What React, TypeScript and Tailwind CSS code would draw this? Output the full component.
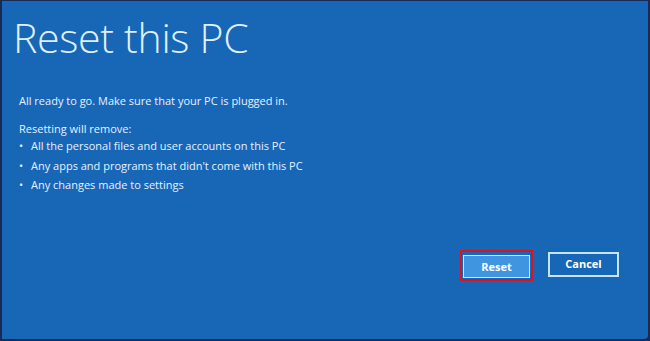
import React from 'react';

const items = [
    "All the personal files and user accounts on this PC",
    "Any apps and programs that didn't come with this PC",
    "Any changes made to settings",
];

function App() {
    return (
        <div className="w-[650px] h-[341px] bg-[#1a2a56] pt-px pl-[2px] pr-[2px] pb-[2px]" style={{fontFamily: '"Open Sans", "Noto Sans", sans-serif'}}>
            <div className="w-full h-full bg-[#1866b6] flex flex-col text-[#e6f2ff] rounded-br-[4px]">
                <h1 className="text-[41px] font-light leading-none pl-[11px] pt-[16px] tracking-[-0.3px] text-[#dff0ff]">Reset this PC</h1>
                <p className="text-[11px] pl-[17px] mt-[35px]">All ready to go. Make sure that your PC is plugged in.</p>
                <p className="text-[11px] pl-[17px] mt-[11px]">Resetting will remove:</p>
                <ul className="text-[11px] pl-[17px] mt-px flex flex-col gap-[3px]">
                    {items.map((item) => (
                        <li key={item} className="flex items-center">
                            <span className="w-[12px]">•</span>
                            <span>{item}</span>
                        </li>
                    ))}
                </ul>
                <div className="flex justify-end gap-[15px] pr-[29px] mt-[56px]">
                    <div className="border-2 border-[#e0101c] p-px">
                        <button className="w-[67px] h-[23px] bg-[#3f95df] border border-[#cfe6fb] text-white text-[11px] font-bold">Reset</button>
                    </div>
                    <button className="w-[71px] h-[25px] mt-[2px] border-2 border-[#c6e4fb] text-white text-[11px] font-bold">Cancel</button>
                </div>
            </div>
        </div>
    );
}

export default App;
